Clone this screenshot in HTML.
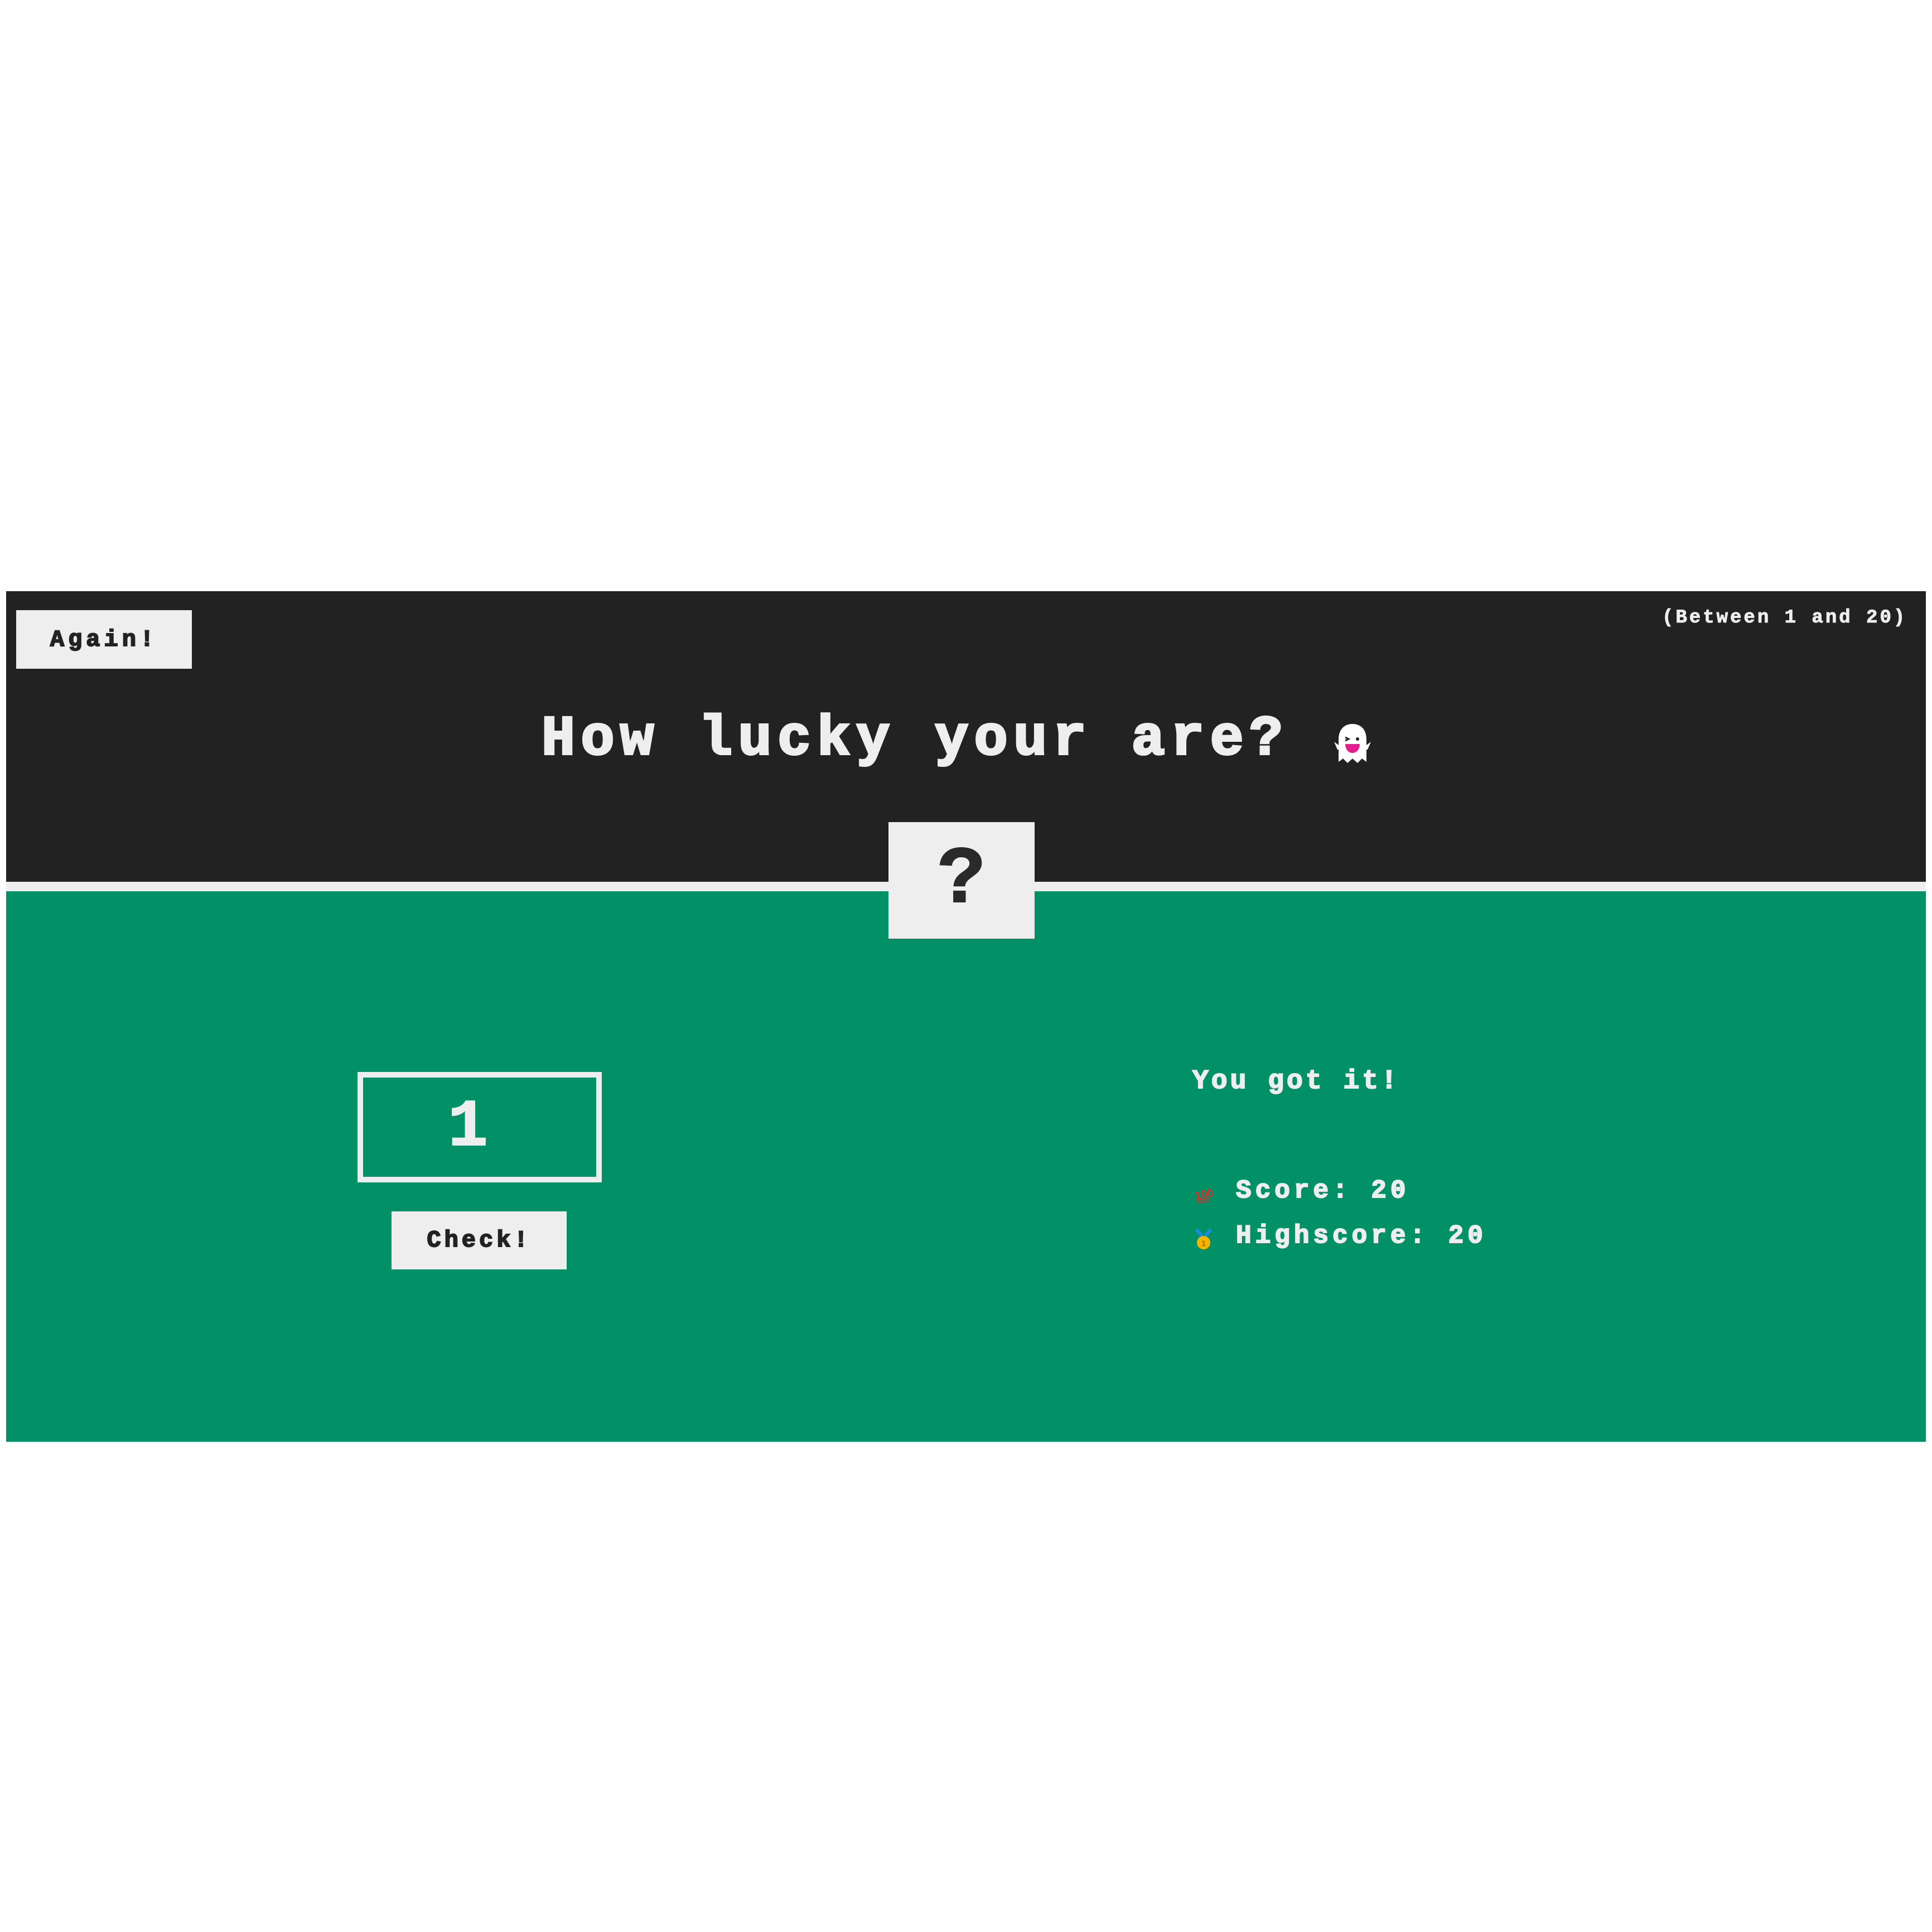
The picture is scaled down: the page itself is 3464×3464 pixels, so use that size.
<!DOCTYPE html>
<html><head><meta charset="utf-8"><style>
html,body{margin:0;padding:0;background:#fefefe;width:3464px;height:3464px;overflow:hidden;position:relative;font-family:"Liberation Mono",monospace;font-weight:bold}
.a{position:absolute;line-height:1;white-space:pre}
.t{-webkit-text-stroke:2px currentColor}
</style></head><body>
<div class="a" style="left:11px;top:1060px;width:3442px;height:522px;background:#222"></div>
<div class="a" style="left:11px;top:1581px;width:3442px;height:17px;background:#eee"></div>
<div class="a" style="left:11px;top:1598px;width:3442px;height:987px;background:#029166"></div>

<div class="a" style="left:29px;top:1094px;width:315px;height:105px;background:#eee"></div>
<div class="a t" style="left:29px;top:1126px;width:315px;text-align:center;font-size:42px;letter-spacing:7px;color:#222">Again!</div>

<div class="a t" style="left:2980px;top:1091px;font-size:34px;letter-spacing:4px;color:#eee;-webkit-text-stroke:1px #eee">(Between 1 and 20)</div>

<div class="a t" style="left:971px;top:1277px;font-size:100px;letter-spacing:10.5px;color:#eee;-webkit-text-stroke:4px #eee">How lucky your are?</div>

<svg class="a" style="left:2388px;top:1296px" width="74" height="76" viewBox="0 0 74 76">
<path d="M12 30 C12 10 24 2 37 2 C50 2 62 10 62 30 L62 40 L70 34 L64 48 L62 48 L62 70 L54 64 L46 72 L37 64 L28 72 L20 64 L12 70 L12 48 L10 48 L4 34 L12 40 Z" fill="#fff"/>
<path d="M24 26 L30 29 L24 32" stroke="#222" stroke-width="3" fill="none"/>
<circle cx="46" cy="29" r="3" fill="#222"/>
<path d="M24 38 L50 38 C50 50 42 54 37 54 C30 54 24 48 24 38 Z" fill="#e0208f"/>
</svg>

<div class="a" style="left:1593px;top:1474px;width:262px;height:209px;background:#eee"></div>
<div class="a t" style="left:1593px;top:1506px;width:262px;text-align:center;font-size:145px;color:#2a2a2a">?</div>

<div class="a" style="left:641px;top:1922px;width:418px;height:178px;border:10px solid #eee"></div>
<div class="a t" style="left:641px;top:1962px;width:396px;text-align:center;font-size:120px;color:#eee">1</div>

<div class="a" style="left:702px;top:2172px;width:314px;height:104px;background:#eee"></div>
<div class="a t" style="left:702px;top:2203px;width:314px;text-align:center;font-size:42px;letter-spacing:6px;color:#222">Check!</div>

<div class="a t" style="left:2138px;top:1915px;font-size:48px;letter-spacing:5px;color:#eee">You got it!</div>

<svg class="a" style="left:2140px;top:2126px" width="36" height="32" viewBox="0 0 36 32">
<text x="2" y="22" font-family="Liberation Sans,sans-serif" font-weight="bold" font-size="20" fill="#d9302b" transform="rotate(-12 18 16)">100</text>
<path d="M6 26 L30 22 M8 30 L28 27" stroke="#d9302b" stroke-width="2"/>
</svg>
<div class="a t" style="left:2216px;top:2112px;font-size:46px;letter-spacing:7px;color:#eee">Score: 20</div>

<svg class="a" style="left:2141px;top:2202px" width="34" height="40" viewBox="0 0 34 40">
<path d="M4 2 L14 14 M30 2 L20 14" stroke="#1e88e5" stroke-width="6"/>
<circle cx="17" cy="26" r="12" fill="#f4b400"/>
<text x="17" y="32" text-anchor="middle" font-family="Liberation Sans,sans-serif" font-size="14" fill="#b36b00">1</text>
</svg>
<div class="a t" style="left:2216px;top:2193px;font-size:46px;letter-spacing:7px;color:#eee">Highscore: 20</div>
</body></html>
